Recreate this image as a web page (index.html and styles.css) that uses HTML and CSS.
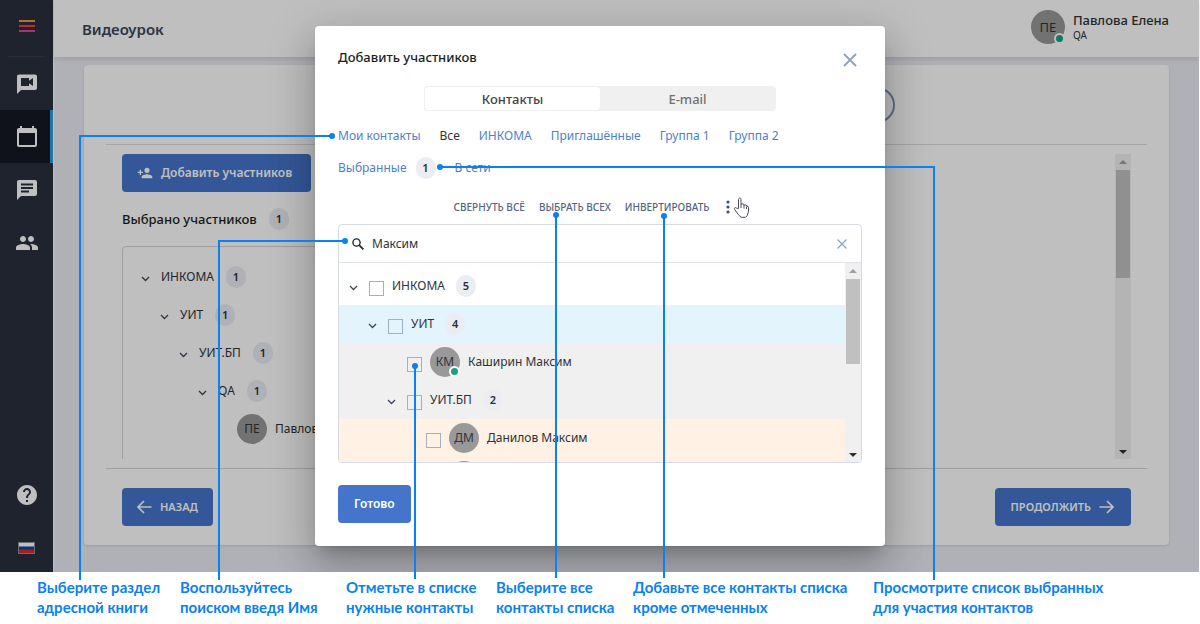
FILE: index.html
```html
<!DOCTYPE html>
<html lang="ru">
<head>
<meta charset="utf-8">
<title>Видеоурок</title>
<link rel="stylesheet" href="styles.css">
</head>
<body>
<div class="guide">
<div class="app">
  <nav class="sidebar">
    <a class="side-item side-logo" href="#" aria-label="Меню"><svg width="16" height="14" viewBox="0 0 16 14"><path d="M0 2h16" stroke="#f79433" stroke-width="2"/><path d="M0 7h16" stroke="#f0452a" stroke-width="2"/><path d="M0 12h16" stroke="#e0489f" stroke-width="2"/></svg></a>
    <a class="side-item" href="#" aria-label="Видеочат"><svg width="24" height="24" viewBox="0 0 24 24" fill="currentColor"><path fill-rule="evenodd" d="M20 2.500H4c-1.100 0-2 .9-2 2V22l4-4h14c1.100 0 2-.9 2-2V4.500c0-1.100-.9-2-2-2zM18 14l-4-2.700V14H6V6h8v2.700L18 6z"/></svg></a>
    <a class="side-item side-active" href="#" aria-label="Календарь"><svg width="24" height="24" viewBox="0 0 24 24" fill="currentColor"><path fill-rule="evenodd" d="M20 3h-1V1h-2v2H7V1H5v2H4c-1.100 0-2 .9-2 2v15c0 1.100.9 2 2 2h16c1.100 0 2-.9 2-2V5c0-1.100-.9-2-2-2zm0 17H4V8h16z"/></svg></a>
    <a class="side-item" href="#" aria-label="Сообщения"><svg width="24" height="24" viewBox="0 0 24 24" fill="currentColor"><path fill-rule="evenodd" d="M20 2H4c-1.100 0-2 .9-2 2v18l4-4h14c1.100 0 2-.9 2-2V4c0-1.100-.9-2-2-2zM6 5.500h12v2H6zm0 3.500h12v2H6zm8 5.500H6v-2h8z"/></svg></a>
    <a class="side-item" href="#" aria-label="Контакты"><svg width="24" height="24" viewBox="0 0 24 24" fill="currentColor"><path d="M16 11c1.660 0 2.990-1.340 2.990-3S17.660 5 16 5s-3 1.340-3 3 1.340 3 3 3zm-8 0c1.660 0 2.990-1.340 2.990-3S9.660 5 8 5 5 6.340 5 8s1.340 3 3 3zm0 2c-2.330 0-7 1.170-7 3.500V19h14v-2.500c0-2.330-4.670-3.500-7-3.500zm8 0c-.29 0-.62.02-.97.050 1.160.84 1.970 1.970 1.970 3.450V19h6v-2.500c0-2.330-4.670-3.500-7-3.500z"/></svg></a>
    <a class="side-item side-help" href="#" aria-label="Помощь"><svg width="24" height="24" viewBox="0 0 24 24" fill="currentColor"><path d="M12 2C6.480 2 2 6.480 2 12s4.480 10 10 10 10-4.480 10-10S17.520 2 12 2zm1 17h-2v-2h2v2zm2.070-7.750l-.9.920C13.450 12.900 13 13.500 13 15h-2v-.5c0-1.100.45-2.100 1.170-2.830l1.240-1.260c.37-.36.59-.86.59-1.410 0-1.100-.9-2-2-2s-2 .9-2 2H8c0-2.210 1.790-4 4-4s4 1.790 4 4c0 .88-.36 1.680-.93 2.250z"/></svg></a>
    <a class="side-item side-lang" href="#" aria-label="Русский"><svg width="17" height="12" viewBox="0 0 17 12"><path fill="#8d9096" d="M0 0h17v12H0z"/><path fill="#fff" d="M1 1h15v4H1z"/><path fill="#103ea8" d="M1 4.500h15V8H1z"/><path fill="#e02a22" d="M1 7.500h15V11H1z"/></svg></a>
  </nav>

  <div class="page">
    <header class="header">
      <h1 class="page-title">Видеоурок</h1>
      <div class="user">
        <span class="avatar avatar-user">ПЕ<i class="online"></i></span>
        <div class="user-text"><b class="user-name">Павлова Елена</b><span class="user-role">QA</span></div>
      </div>
    </header>

    <main class="panel">
      <div class="steps"><span class="step"></span><span class="step"></span></div>
      <section class="step-body">
        <div class="step-content">
          <button class="btn btn-add" type="button"><svg width="16" height="16" viewBox="0 0 24 24" fill="currentColor"><path d="M15 12c2.210 0 4-1.790 4-4s-1.790-4-4-4-4 1.790-4 4 1.790 4 4 4zm-9-2V7H4v3H1v2h3v3h2v-3h3v-2H6zm9 4c-2.670 0-8 1.340-8 4v2h16v-2c0-2.660-5.330-4-8-4z"/></svg>Добавить участников</button>
          <div class="selected">Выбрано участников <span class="badge">1</span></div>
          <ul class="chosen">
            <li class="node"><svg class="chev" viewBox="0 0 9 6"><path d="M1 1l3.500 3.500L8 1"/></svg>ИНКОМА<span class="badge">1</span></li>
            <li class="node level-1"><svg class="chev" viewBox="0 0 9 6"><path d="M1 1l3.500 3.500L8 1"/></svg>УИТ<span class="badge">1</span></li>
            <li class="node level-2"><svg class="chev" viewBox="0 0 9 6"><path d="M1 1l3.500 3.500L8 1"/></svg>УИТ.БП<span class="badge">1</span></li>
            <li class="node level-3"><svg class="chev" viewBox="0 0 9 6"><path d="M1 1l3.500 3.500L8 1"/></svg>QA<span class="badge">1</span></li>
            <li class="node level-5"><span class="avatar">ПЕ</span>Павлова Елена</li>
          </ul>
        </div>
        <div class="scrollbar"><svg class="arrow arrow-off" viewBox="0 0 8 4"><path d="M0 4l4-4 4 4z"/></svg><span class="thumb thumb-page"></span><svg class="arrow arrow-down" viewBox="0 0 8 4"><path d="M0 0h8L4 4z"/></svg></div>
      </section>
      <footer class="panel-foot">
        <button class="btn" type="button"><svg width="15" height="14" viewBox="0 0 15 14" class="line-icon"><path d="M14.500 7H1M7 1L1 7l6 6"/></svg>НАЗАД</button>
        <button class="btn btn-next" type="button">ПРОДОЛЖИТЬ<svg width="15" height="14" viewBox="0 0 15 14" class="line-icon"><path d="M.5 7H14M8 1l6 6-6 6"/></svg></button>
      </footer>
    </main>
  </div>

  <div class="overlay">
    <div class="modal" role="dialog" aria-labelledby="dlg-title">
      <div class="modal-head">
        <h2 class="modal-title" id="dlg-title">Добавить участников</h2>
        <button class="plain" type="button" aria-label="Закрыть"><svg width="14" height="14" viewBox="0 0 14 14" class="cross"><path d="M1 1l12 12M13 1L1 13" stroke-width="2"/></svg></button>
      </div>
      <div class="tabs"><button class="tab tab-on" type="button">Контакты</button><button class="tab" type="button">E-mail</button></div>
      <div class="filters">
        <a href="#" class="filter">Мои контакты</a>
        <a href="#" class="filter filter-on">Все</a>
        <a href="#" class="filter">ИНКОМА</a>
        <a href="#" class="filter">Приглашённые</a>
        <a href="#" class="filter">Группа 1</a>
        <a href="#" class="filter">Группа 2</a>
        <a href="#" class="filter">Выбранные<span class="badge">1</span></a>
        <a href="#" class="filter">В сети</a>
      </div>
      <div class="tools">
        <button class="plain tool" type="button">СВЕРНУТЬ ВСЁ</button>
        <button class="plain tool" type="button">ВЫБРАТЬ ВСЕХ</button>
        <button class="plain tool" type="button">ИНВЕРТИРОВАТЬ</button>
        <button class="plain more" type="button" aria-label="Ещё"><svg width="4" height="14" viewBox="0 0 4 14" fill="#42526e"><circle cx="2" cy="2" r="1.600"/><circle cx="2" cy="7" r="1.600"/><circle cx="2" cy="12" r="1.600"/></svg></button>
      </div>
      <div class="picker">
        <div class="search">
          <svg width="12" height="12" viewBox="0 0 12 12" fill="none" stroke="#1f2a3c" stroke-width="1.400"><circle cx="4.500" cy="4.500" r="3.600"/><path d="M7.200 7.200l4.200 4.200" stroke-width="1.800"/></svg>
          <input class="search-input" type="text" aria-label="Поиск" value="Максим">
          <button class="plain" type="button" aria-label="Очистить"><svg width="10" height="10" viewBox="0 0 10 10" class="cross"><path d="M.5.5l9 9M9.500.5l-9 9" stroke-width="1.300"/></svg></button>
        </div>
        <div class="list-wrap">
          <div class="list">
            <div class="row"><svg class="chev" viewBox="0 0 9 6"><path d="M1 1l3.500 3.500L8 1"/></svg><input class="check" type="checkbox" id="c1"><label for="c1">ИНКОМА</label><span class="badge">5</span></div>
            <div class="row level-1 row-blue"><svg class="chev" viewBox="0 0 9 6"><path d="M1 1l3.500 3.500L8 1"/></svg><input class="check" type="checkbox" id="c2"><label for="c2">УИТ</label><span class="badge">4</span></div>
            <div class="row level-3 row-gray"><input class="check" type="checkbox" id="c3"><label class="person" for="c3"><span class="avatar">КМ<i class="online"></i></span>Каширин Максим</label></div>
            <div class="row level-2 row-gray"><svg class="chev" viewBox="0 0 9 6"><path d="M1 1l3.500 3.500L8 1"/></svg><input class="check" type="checkbox" id="c4"><label for="c4">УИТ.БП</label><span class="badge">2</span></div>
            <div class="row level-4 row-peach"><input class="check" type="checkbox" id="c5"><label class="person" for="c5"><span class="avatar">ДМ</span>Данилов Максим</label></div>
            <div class="row level-4 row-peach"><input class="check" type="checkbox" id="c6" aria-label="Контакт"><span class="avatar"></span></div>
          </div>
          <div class="scrollbar"><svg class="arrow arrow-off" viewBox="0 0 8 4"><path d="M0 4l4-4 4 4z"/></svg><span class="thumb thumb-list"></span><svg class="arrow arrow-down" viewBox="0 0 8 4"><path d="M0 0h8L4 4z"/></svg></div>
        </div>
      </div>
      <button class="btn btn-done" type="button">Готово</button>
    </div>
  </div>
</div>

<div class="captions">
  <p class="caption">Выберите раздел<br>адресной книги</p>
  <p class="caption">Воспользуйтесь<br>поиском введя Имя</p>
  <p class="caption">Отметьте в списке<br>нужные контакты</p>
  <p class="caption">Выберите все<br>контакты списка</p>
  <p class="caption">Добавьте все контакты списка<br>кроме отмеченных</p>
  <p class="caption">Просмотрите список выбранных<br>для участия контактов</p>
</div>

<svg class="callouts" width="1200" height="624" viewBox="0 0 1200 624">
  <g fill="none" stroke="#0a80f5" stroke-width="2">
    <path d="M332 136H80v444"/>
    <path d="M345 241H219v339"/>
    <path d="M415 366v213"/>
    <path d="M556 215v363"/>
    <path d="M664 216v362"/>
    <path d="M440 167h494v413"/>
  </g>
  <g fill="#0a80f5"><circle cx="332" cy="136" r="3"/><circle cx="345" cy="241" r="3"/><circle cx="415" cy="366" r="3"/><circle cx="556" cy="215" r="3"/><circle cx="664" cy="216" r="3"/><circle cx="440" cy="167" r="3"/></g>
  <path d="M738.500 208.500v-9c0-2 2.500-2 2.500 0v5l1-.8 1.800.6.400.8 1.700-.3.900 1.300 1.300.3.400 1.200v4.200l-1.500 4-1.500 1.500h-4.300l-2.300-2-4-5.500c-1.500-2 .5-2.800 1.700-1.600zM741 204.500v3.500M744 205v3.500M746.500 206.500v2.500" fill="#fff" stroke="#4a4e55"/>
</svg>
</div>
</body>
</html>
```

FILE: styles.css
```css
* { box-sizing: border-box; }
body { margin: 0; background: #fff; color: #2f3237; font: 12px/18px "Noto Sans", "Open Sans", sans-serif; }
button, input { font: inherit; color: inherit; }
h1, h2, p, ul { margin: 0; padding: 0; }
a { text-decoration: none; color: inherit; }
svg { display: block; flex: none; }

.guide { position: relative; }
.app { position: relative; display: flex; margin-right: 1px; background: #ebedf5; }

.sidebar { display: flex; flex-direction: column; width: 53px; flex: none; background: #282f3c; color: #fff; }
.side-item { display: flex; align-items: center; justify-content: center; height: 53px; }
.side-logo { height: 57px; padding-bottom: 4px; margin: 0 8px; border-bottom: 1px solid #353d4b; }
.side-active { background: #141923; box-shadow: inset -3px 0 #2b9fdc; }
.side-help { height: 58px; margin-top: auto; }
.side-lang { height: 48px; }

.page { flex: 1; min-width: 0; border-left: 1px solid #fff; }
.header { display: flex; align-items: center; justify-content: space-between; height: 57px; padding: 0 30px 3px 28px; background: #fff; box-shadow: 0 1px 6px rgba(0, 0, 0, .15); }
.page-title { font-size: 15px; line-height: 22px; font-weight: 600; color: #3a4759; padding-top: 3px; }
.user { display: flex; align-items: center; gap: 8px; }
.user-text { display: flex; flex-direction: column; }
.user-name { font-size: 13px; line-height: 16px; font-weight: 500; }
.user-role { font-size: 10px; line-height: 14px; }

.avatar { position: relative; display: flex; align-items: center; justify-content: center; flex: none; width: 30px; height: 30px; border-radius: 50%; background: #999; color: #333; }
.avatar-user { width: 34px; height: 34px; font-size: 13px; }
.online { position: absolute; right: 0; bottom: 0; width: 11px; height: 11px; border: 2px solid #fff; border-radius: 50%; background: #12a480; }

.panel { margin: 8px 30px 27px; padding: 0 22px; border-radius: 4px; background: #fff; box-shadow: 0 1px 3px rgba(40, 50, 80, .15); }
.steps { display: flex; justify-content: space-between; width: 50%; min-width: 536px; margin: 0 auto; padding: 22px 0 21px; }
.step { width: 36px; height: 36px; border: 2px solid #7d91af; border-radius: 50%; }
.step-body { display: flex; height: 325px; padding: 9px 16px; border-top: 1px solid #dcdcdc; border-bottom: 1px solid #d4d4d4; }
.step-content { flex: 1; overflow: hidden; }
.panel-foot { display: flex; justify-content: space-between; padding: 19px 16px; }

.btn { display: inline-flex; align-items: center; gap: 8px; height: 38px; padding: 0 15px; border: 0; border-radius: 4px; background: #4475cb; color: #fff; font-size: 11px; font-weight: 600; }
.btn-add { padding: 0 19px 0 15px; font-size: 12px; }
.btn-next { padding: 0 17px 0 16px; }
.btn-done { margin-top: 22px; font-size: 12px; padding: 0 16px; }
.line-icon { fill: none; stroke: currentColor; stroke-width: 1.700; }
.selected { display: flex; align-items: center; gap: 12px; height: 54px; font-size: 13px; font-weight: 500; color: #1c1e22; }
.badge { display: flex; align-items: center; justify-content: center; width: 20px; height: 22px; border-radius: 10px; background: #ebedf3; color: #2b2f36; font-size: 11px; font-weight: 600; }
.chosen { width: 60%; height: 240px; padding: 11px 0; border: 1px solid #d4d4d4; border-radius: 4px; list-style: none; }
.node { display: flex; align-items: center; height: 38px; padding-left: 18px; }
.node .badge { margin-left: 12px; }
.node .chev { margin-right: 11px; }
.chev { width: 9px; height: 6px; margin-top: 4px; fill: none; stroke: #3c4658; stroke-width: 1.300; }
.node .avatar { margin-right: 8px; }
.node.level-1 { padding-left: 37px; }
.node.level-2 { padding-left: 56px; }
.node.level-3 { padding-left: 75px; }
.node.level-5 { padding-left: 114px; }

.scrollbar { display: flex; flex-direction: column; align-items: center; width: 16px; padding: 6px 0 5px; background: #f0f0f0; }
.arrow { width: 8px; height: 4px; }
.arrow-off { fill: #a0a0a0; }
.arrow-down { margin-top: auto; fill: #303030; }
.thumb { width: 14px; margin-top: 6px; background: #c0c0c0; }
.thumb-page { height: 108px; }
.thumb-list { height: 85px; }

.overlay { position: absolute; inset: 0; display: flex; align-items: center; justify-content: center; padding-left: 1px; overflow: hidden; background: rgba(0, 0, 0, .25); }
.modal { width: 570px; padding: 22px 23px 23px; border-radius: 4px; background: #fff; box-shadow: 0 11px 15px -7px rgba(0, 0, 0, .2), 0 24px 38px 3px rgba(0, 0, 0, .14), 0 9px 46px 8px rgba(0, 0, 0, .12); }
.modal-head { display: flex; justify-content: space-between; height: 38px; padding-right: 5px; }
.modal-title { font-size: 13px; line-height: 18px; font-weight: 500; color: #1c1e22; }
.plain { padding: 0; border: 0; background: none; }
.modal-head .plain { align-self: flex-start; padding-top: 5px; }
.cross { fill: none; stroke: #8fa3bf; }
.tabs { display: grid; grid-template-columns: 1fr 1fr; width: 352px; height: 25px; margin: 0 auto; padding: 1px; border-radius: 4px; background: #f0f0f0; }
.tab { padding: 0; border: 0; border-radius: 4px; background: none; font-size: 13px; font-weight: 500; color: #707070; }
.tab-on { background: #fff; color: #444; }
.filters { display: flex; flex-wrap: wrap; column-gap: 19px; padding-top: 9px; }
.filter { display: flex; align-items: center; gap: 9px; height: 32px; color: #4d7fd0; }
.filter-on { color: #333; }
.tools { display: flex; align-items: center; justify-content: center; gap: 14px; height: 40px; padding: 5px 16px 0 0; }
.tool { font-size: 10px; font-weight: 500; color: #53657f; }
.more { margin-left: 3px; }
.picker { display: flex; flex-direction: column; height: 239px; border: 1px solid #d5dae5; border-radius: 4px; overflow: hidden; }
.search { display: flex; align-items: center; gap: 8px; height: 38px; flex: none; padding: 0 14px 0 13px; border-bottom: 1px solid #e0e4ea; }
.search-input { flex: 1; min-width: 0; padding: 0; border: 0; outline: 0; background: none; }
.list-wrap { display: flex; flex: 1; min-height: 0; }
.list { flex: 1; padding-top: 4px; overflow: hidden; }
.row { display: flex; align-items: center; height: 38px; padding-left: 10px; }
.row .badge { margin-left: 11px; }
.row .chev { margin-right: 11px; }
.check { appearance: none; flex: none; width: 15px; height: 15px; margin: 4px 8px 0 0; border: 1px solid #a3afc2; background: transparent; }
.person { display: flex; align-items: center; gap: 8px; }
.row.level-1 { padding-left: 29px; }
.row.level-2 { padding-left: 48px; }
.row.level-3 { padding-left: 68px; }
.row.level-4 { padding-left: 87px; }
.row-blue { background: #e3f4fd; }
.row-gray { background: #f0f0f0; }
.row-peach { background: #fff1e3; }

.captions { display: grid; grid-template-columns: 143px 166px 150px 137px 240px 1fr; padding: 5px 0 7px 37px; }
.caption { font: bold 15px/20px Lato, "Open Sans", sans-serif; color: #0a80f5; white-space: nowrap; }
.callouts { position: absolute; top: 0; left: 0; pointer-events: none; }
```
